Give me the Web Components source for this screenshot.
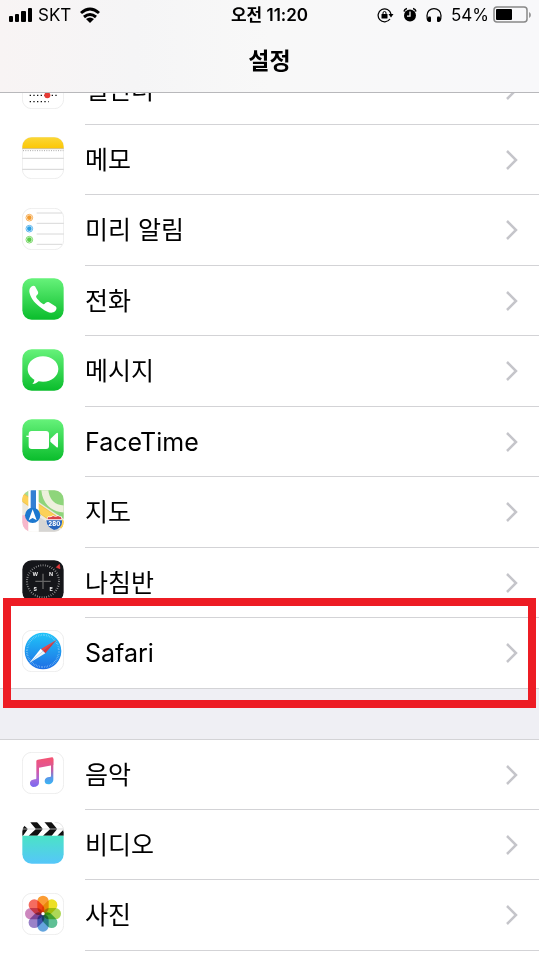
<!DOCTYPE html>
<html lang="ko">
<head>
<meta charset="utf-8">
<meta name="viewport" content="width=device-width, initial-scale=1">
<title>설정</title>
<style>
    body {
        margin: 0;
        background: #fff;
        color: #000;
        font-family: Inter, "Noto Sans CJK KR", sans-serif;
    }
</style>
</head>
<body>
<settings-screen>
    <status-bar slot="header" carrier="SKT" time="오전 11:20" battery="54"></status-bar>
    <nav-title slot="header">설정</nav-title>

    <settings-group>
        <settings-row icon="calendar">캘린더</settings-row>
        <settings-row icon="notes">메모</settings-row>
        <settings-row icon="reminders">미리 알림</settings-row>
        <settings-row icon="phone">전화</settings-row>
        <settings-row icon="messages">메시지</settings-row>
        <settings-row icon="facetime">FaceTime</settings-row>
        <settings-row icon="maps">지도</settings-row>
        <settings-row icon="compass">나침반</settings-row>
        <settings-row icon="safari" marked>Safari</settings-row>
    </settings-group>
    <settings-group>
        <settings-row icon="music">음악</settings-row>
        <settings-row icon="videos">비디오</settings-row>
        <settings-row icon="photos">사진</settings-row>
    </settings-group>
</settings-screen>

<script>
const greenGradient = `
    <linearGradient id="green" x2="0" y2="1">
        <stop offset="0" stop-color="#66f27a"/><stop offset="1" stop-color="#0abd2c"/>
    </linearGradient>`;

const tile = (fill) => `<rect x="1" y="1" width="124" height="124" rx="28" fill="${fill}"/>`;
const whiteTile = `<rect x="1" y="1" width="124" height="124" rx="28" fill="#fff" stroke="#e4e4e4" stroke-width="2"/>`;
const clip = `<clipPath id="tile"><rect x="1" y="1" width="124" height="124" rx="28"/></clipPath>`;

const petalColors = ['#fb9c34', '#ece024', '#aed857', '#5fc095', '#65a5de', '#9a82c8', '#cd87be', '#f56c60'];
const petals = petalColors.map((color, i) =>
    `<rect x="46" y="8" width="34" height="53" rx="17" fill="${color}" transform="rotate(${i * 45} 63 62)"/>`
).join('');

// every icon is drawn on a 126 x 126 board
const icons = {
    calendar: `${whiteTile}
        <g fill="none" stroke="#111" stroke-width="4" stroke-dasharray="4 7">
            <path d="M23 46H108M23 65H108M23 85H108M23 104H80"/>
        </g>
        <circle cx="76" cy="85" r="9" fill="#e63b35"/>`,

    notes: `<defs>${clip}<linearGradient id="pad" x2="0" y2="1">
            <stop offset="0" stop-color="#fbd737"/><stop offset="1" stop-color="#fcc705"/>
        </linearGradient></defs>
        ${whiteTile}
        <g clip-path="url(#tile)">
            <path d="M0 0H126V34H0z" fill="url(#pad)"/>
            <path d="M0 35H126" stroke="#b79d55" stroke-width="2"/>
            <path d="M3 41H126" stroke="#a9a9a9" stroke-width="3" stroke-dasharray="3 4"/>
            <path d="M0 64H126M0 97H126" stroke="#bdbdbd" stroke-width="2"/>
        </g>`,

    reminders: `${whiteTile}
        <path d="M44 15H120M44 46H125M44 78H125M44 109H120" stroke="#c4c4c4" stroke-width="2"/>
        <g fill="#fff" stroke-width="3">
            <circle cx="22" cy="29" r="10" stroke="#f7b15c"/>
            <circle cx="22" cy="62" r="10" stroke="#62b9ef"/>
            <circle cx="22" cy="95" r="10" stroke="#80da70"/>
        </g>
        <circle cx="22" cy="29" r="7" fill="#f29a2e"/>
        <circle cx="22" cy="62" r="7" fill="#2ba0e4"/>
        <circle cx="22" cy="95" r="7" fill="#5ccd4b"/>`,

    phone: `<defs>${greenGradient}</defs>${tile('url(#green)')}
        <path fill="#fff" d="M25 29c4-5 10-8 14-4l9 16c2 5-1 8-5 12-2 3 0 7 7 14 8 9 13 13 17 11 5-5 9-8 14-5l18 11c7 4 5 11 0 16-9 8-22 5-40-9C40 78 27 62 23 46c-2-7-1-13 2-17z"/>`,

    messages: `<defs>${greenGradient}</defs>${tile('url(#green)')}
        <path fill="#fff" d="M63 22c26 0 46 17 46 38s-20 38-46 38c-4 0-9 0-13-1-5 5-12 8-19 8 4-4 6-8 6-13-12-7-20-19-20-32 0-21 20-38 46-38z"/>`,

    facetime: `<defs>${greenGradient}</defs>${tile('url(#green)')}
        <rect x="20" y="36" width="61" height="54" rx="9" fill="#fff"/>
        <path fill="#fff" d="M85 60l18-17q5-4 5 2v37q0 6-5 2L85 68z"/>
        <path d="M13 52h8" stroke="#fff" stroke-width="4"/>`,

    maps: `<defs>${clip}</defs>
        <g clip-path="url(#tile)">
            <path fill="#ece9df" d="M0 0H126V126H0z"/>
            <path fill="#8ed57b" d="M47 0H126V87L47 34z"/>
            <path fill="#a6dc94" d="M0 0H23V28L0 13z"/>
            <path fill="#f7b7cc" d="M0 76H20V126H0z"/>
            <path fill="#d6d5d3" d="M50 80L126 126H50z"/>
            <path d="M-6 17L132 111" fill="none" stroke="#eec34e" stroke-width="24"/>
            <path d="M-6 17L132 111" fill="none" stroke="#fcd158" stroke-width="19"/>
            <path d="M68-5c2 38 24 62 63 62" fill="none" stroke="#edf0dc" stroke-width="21"/>
            <path fill="#fff" d="M19 0H50V126H19z"/>
            <path fill="#337fd3" d="M26 0H42V78H26z"/>
            <circle cx="32" cy="76" r="23" fill="#1c78cf"/>
            <path fill="#fff" d="M32 58L44 91 32 84 20 91z"/>
            <path fill="#fff" d="M78 79q8 2 15-3 7 5 15 0 4 4 10 2 6 21-4 31-7 8-18 11-14-5-20-14-5-12 2-27z"/>
            <path fill="#2865bd" d="M73 91h47q1 16-8 22-6 5-16 7-11-4-17-11-5-7-6-18z"/>
            <path fill="#d94346" d="M79 81q7 2 14-3 8 5 15 0 4 3 8 2l3 8H76z"/>
            <text x="97" y="108" text-anchor="middle" font-family="Inter, sans-serif" font-size="18" font-weight="800" fill="#fff">280</text>
        </g>`,

    compass: `${tile('#15161a')}
        <circle cx="63" cy="64" r="48" fill="none" stroke="#aaa" stroke-width="6" stroke-dasharray="2 5"/>
        <path d="M40 64H86M63 41V87" stroke="#666" stroke-width="4"/>
        <path d="M103 22l9-9 2 13z" fill="#e53b3b" stroke="#e53b3b" stroke-width="2"/>
        <g fill="#eee" font-family="Inter, sans-serif" font-size="16" font-weight="700" text-anchor="middle">
            <text x="40" y="48">W</text><text x="87" y="48">N</text>
            <text x="40" y="93">S</text><text x="87" y="93">E</text>
        </g>`,

    safari: `<defs><linearGradient id="sky" x2="0" y2="1">
            <stop offset="0" stop-color="#20c5f9"/><stop offset="1" stop-color="#1e6ee5"/>
        </linearGradient></defs>
        ${whiteTile}
        <circle cx="63" cy="63" r="55" fill="url(#sky)"/>
        <circle cx="63" cy="63" r="48" fill="none" stroke="#bce4fb" stroke-width="6" stroke-dasharray="1 4"/>
        <path fill="#ee4544" d="M104 29L57 57 63 63z"/>
        <path fill="#d93639" d="M104 29L70 70 63 63z"/>
        <path fill="#fff" d="M22 99L56 56 63 63z"/>
        <path fill="#eef4f8" d="M22 99L70 70 63 63z"/>`,

    music: `<defs><linearGradient id="tune" gradientUnits="userSpaceOnUse" x1="60" y1="18" x2="60" y2="106">
            <stop offset="0" stop-color="#f35474"/><stop offset=".4" stop-color="#db569f"/>
            <stop offset=".75" stop-color="#a06ce0"/><stop offset="1" stop-color="#7766f0"/>
        </linearGradient><linearGradient id="stem" gradientUnits="userSpaceOnUse" x1="0" y1="25" x2="0" y2="96">
            <stop offset="0" stop-color="#f35474"/><stop offset=".4" stop-color="#c25ca8"/>
            <stop offset=".75" stop-color="#5799eb"/><stop offset="1" stop-color="#39b4f2"/>
        </linearGradient></defs>
        ${whiteTile}
        <path fill="url(#tune)" d="M43 27q0-3 4-4l43-7q4 0 4 4v19l-43 8v44c0 10-8 14-15 14-8 0-12-5-12-11 0-8 7-11 14-12 4 0 5-1 5-4z"/>
        <path fill="url(#stem)" d="M87 23l7-3v62c0 10-7 15-15 15-7 0-11-4-11-10 0-8 7-12 14-12 3 0 5-1 5-4z"/>`,

    videos: `<defs>${clip}<linearGradient id="slate" x2="0" y2="1">
            <stop offset="0" stop-color="#4be3c6"/><stop offset="1" stop-color="#55c6fa"/>
        </linearGradient></defs>
        <g clip-path="url(#tile)">
            <path fill="#fff" d="M0 0H126V41H0z"/>
            <path fill="#111" d="M-4 10h9l12 10H-4zM24 0h21l17 20H41zM67 0h21l17 20H84z"/>
            <path fill="#111" d="M-4 22h21L3 41H-4zM41 22h21L46 41H20zM84 22h21L89 41H63zM126 22v19h-20z"/>
            <path d="M0 21H126" stroke="#999" stroke-width="1"/>
            <path fill="url(#slate)" d="M0 41H126V126H0z"/>
        </g>
        <path d="M98 1Q125 1 125 29" fill="none" stroke="#ddd" stroke-width="2"/>`,

    photos: `${whiteTile}
        <g style="isolation: isolate">${petals}</g>
        <circle cx="63" cy="62" r="5" fill="#fff"/>`
};

class AppIcon extends HTMLElement {
    constructor() {
        super();
        this.attachShadow({ mode: 'open' });
    }

    connectedCallback() {
        this.shadowRoot.innerHTML = `
            <style>
                :host { display: block; flex: none; width: 42px; height: 42px; }
                svg { display: block; width: 100%; height: 100%; }
                g[style] rect { mix-blend-mode: multiply; }
            </style>
            <svg viewBox="0 0 126 126" aria-hidden="true">${icons[this.getAttribute('name')] || ''}</svg>
        `;
    }
}

class StatusBar extends HTMLElement {
    constructor() {
        super();
        this.attachShadow({ mode: 'open' });
    }

    connectedCallback() {
        const battery = this.getAttribute('battery');
        this.shadowRoot.innerHTML = `
            <style>
                :host {
                    display: grid;
                    grid-template-columns: 1fr auto 1fr;
                    align-items: center;
                    height: 30px;
                    padding: 0 8px;
                    font-size: 17px;
                    line-height: 24px;
                }
                div { display: flex; align-items: center; }
                .left { gap: 5px; }
                .wifi { margin-left: 3px; }
                .time { font-weight: 600; }
                .right { justify-content: flex-end; gap: 9px; }
                .power { gap: 4px; }
                svg { display: block; flex: none; }
            </style>
            <div class="left">
                <svg width="25" height="16" viewBox="0 0 25 16" aria-hidden="true">
                    <rect x="1" y="9" width="4" height="6" rx="1"/>
                    <rect x="7" y="7" width="4" height="8" rx="1"/>
                    <rect x="13" y="4" width="5" height="11" rx="1"/>
                    <rect x="20" y="1" width="4" height="14" rx="1"/>
                </svg>
                <span>${this.getAttribute('carrier')}</span>
                <svg class="wifi" width="22" height="16" viewBox="0 0 22 16" aria-hidden="true">
                    <g fill="none" stroke="#000" stroke-width="3">
                        <path d="M2 6Q11-2 20 6"/><path d="M5 10q6-5 12 0"/>
                    </g>
                    <path d="M7 12q4-3 8 0l-4 4z"/>
                </svg>
            </div>
            <div class="time">${this.getAttribute('time')}</div>
            <div class="right">
                <svg width="17" height="16" viewBox="0 0 34 32" aria-hidden="true">
                    <path d="M26 24A13 13 0 1 1 28 14" fill="none" stroke="#000" stroke-width="2.5"/>
                    <path d="M23 14h10l-5 7z"/>
                    <rect x="9" y="14" width="12" height="9" rx="1"/>
                    <path d="M12 15v-3a3 3 0 0 1 6 0v3" fill="none" stroke="#000" stroke-width="2"/>
                </svg>
                <svg width="14" height="16" viewBox="0 0 28 32" aria-hidden="true">
                    <circle cx="14" cy="17" r="12"/>
                    <path d="M2 9q1-5 6-6M20 3q5 1 6 6" fill="none" stroke="#000" stroke-width="3"/>
                    <path d="M14 9v9H8" fill="none" stroke="#fff" stroke-width="2.5"/>
                </svg>
                <svg width="16" height="16" viewBox="0 0 32 32" aria-hidden="true">
                    <path d="M4 28Q2 24 2 17a14 14 0 0 1 28 0q0 7-2 11" fill="none" stroke="#000" stroke-width="2.5"/>
                    <rect x="4" y="19" width="6" height="11" rx="2"/>
                    <rect x="22" y="19" width="6" height="11" rx="2"/>
                </svg>
                <div class="power">
                    <span>${battery}%</span>
                    <svg width="38" height="18" viewBox="0 0 38 18" aria-hidden="true">
                        <rect x="1" y="1" width="33" height="15" rx="3" fill="none" stroke="#888" stroke-width="1.5"/>
                        <rect x="3" y="3" width="${Math.round(battery * 0.3)}" height="11" rx="1"/>
                        <path d="M36 6q2 1 2 3t-2 3z" fill="#999"/>
                    </svg>
                </div>
            </div>
        `;
    }
}

class NavTitle extends HTMLElement {
    constructor() {
        super();
        this.attachShadow({ mode: 'open' });
        this.shadowRoot.innerHTML = `
            <style>
                :host { display: block; }
                h1 {
                    margin: 0;
                    font-size: 23px;
                    font-weight: 600;
                    line-height: 62px;
                    text-align: center;
                }
            </style>
            <h1><slot></slot></h1>
        `;
    }
}

class SettingsRow extends HTMLElement {
    constructor() {
        super();
        this.attachShadow({ mode: 'open' });
    }

    connectedCallback() {
        this.shadowRoot.innerHTML = `
            <style>
                :host { display: block; position: relative; }
                a {
                    display: flex;
                    gap: 21px;
                    height: 100%;
                    padding-left: 22px;
                    color: inherit;
                    text-decoration: none;
                }
                app-icon { align-self: center; margin-bottom: 4px; }
                .body {
                    flex: 1;
                    display: flex;
                    justify-content: space-between;
                    align-items: center;
                    padding-right: 21px;
                    border-bottom: 1px solid #d3d3d6;
                    font-size: 25px;
                    line-height: 36px;
                }
                :host(:last-child) .body { border-bottom-width: var(--last-line, 1px); }
                .mark { display: none; }
                :host([marked]) .mark {
                    display: block;
                    position: absolute;
                    z-index: 1;
                    inset: -20px 3px -20px;
                    border: 8px solid #ed1c24;
                    pointer-events: none;
                }
            </style>
            <a href="#${this.getAttribute('icon')}">
                <app-icon name="${this.getAttribute('icon')}"></app-icon>
                <span class="body">
                    <span><slot></slot></span>
                    <svg width="12" height="20" viewBox="0 0 12 20" aria-hidden="true">
                        <path d="M1 1l9 9-9 9" fill="none" stroke="#c5c5ca" stroke-width="2.5"/>
                    </svg>
                </span>
            </a>
            <div class="mark"></div>
        `;
    }
}

class SettingsGroup extends HTMLElement {
    constructor() {
        super();
        this.attachShadow({ mode: 'open' });
        this.shadowRoot.innerHTML = `
            <style>
                :host { display: block; background: #fff; }
                nav { display: block; }
                ::slotted(*) { box-sizing: border-box; height: 70px; }
                ::slotted(:nth-child(odd)) { height: 71px; }
                ::slotted(:first-child) { border-top: 1px solid #d3d3d6; }
                ::slotted(:last-child) { border-bottom: var(--edge, none); }
            </style>
            <nav><slot></slot></nav>
        `;
    }
}

class SettingsScreen extends HTMLElement {
    constructor() {
        super();
        this.attachShadow({ mode: 'open' });
        this.shadowRoot.innerHTML = `
            <style>
                :host {
                    display: flex;
                    flex-direction: column;
                    height: 100vh;
                    overflow: hidden;
                }
                header {
                    flex: none;
                    border-bottom: 1px solid #b8b8bb;
                    background: linear-gradient(90deg, #f8f4f4, #f5f5f6 25%, #f8f8f8 50%, #f8f8fa);
                }
                main { flex: 1; min-height: 0; overflow: hidden; }
                /* the list is scrolled part of a row under the header */
                .list {
                    display: flex;
                    flex-direction: column;
                    gap: 50px;
                    margin-top: -39px;
                    background: #efeff4;
                }
                /* a group that ends above a gap closes with a full-width line */
                ::slotted(settings-group:first-of-type) {
                    --last-line: 0;
                    --edge: 1px solid #d3d3d6;
                }
            </style>
            <header><slot name="header"></slot></header>
            <main><div class="list"><slot></slot></div></main>
        `;
    }
}

customElements.define('app-icon', AppIcon);
customElements.define('status-bar', StatusBar);
customElements.define('nav-title', NavTitle);
customElements.define('settings-row', SettingsRow);
customElements.define('settings-group', SettingsGroup);
customElements.define('settings-screen', SettingsScreen);
</script>
</body>
</html>
